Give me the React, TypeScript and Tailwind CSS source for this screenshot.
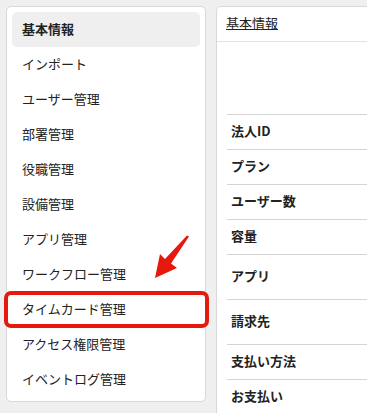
import React from "react";

const items = [
  "基本情報",
  "インポート",
  "ユーザー管理",
  "部署管理",
  "役職管理",
  "設備管理",
  "アプリ管理",
  "ワークフロー管理",
  "タイムカード管理",
  "アクセス権限管理",
  "イベントログ管理",
];

const rows: { label: string; h: string }[] = [
  { label: "法人ID", h: "h-[35px]" },
  { label: "プラン", h: "h-[35px]" },
  { label: "ユーザー数", h: "h-[35px]" },
  { label: "容量", h: "h-[35px]" },
  { label: "アプリ", h: "h-[45px]" },
  { label: "請求先", h: "h-[45px]" },
  { label: "支払い方法", h: "h-[35px]" },
  { label: "お支払い", h: "h-[35px]" },
];

export default function App() {
  return (
    <div
      className="relative w-[367px] h-[413px] overflow-hidden bg-[#efefef] text-[13px] text-[#222]"
      style={{ fontFamily: '"Noto Sans CJK JP", "Noto Sans", sans-serif' }}
    >
      <div className="flex gap-[10px] pt-[6px] pl-[6px]">
        <div className="w-[200px] h-[396px] shrink-0 bg-white border border-[#d8d8d8] rounded-[5px] px-[5px] pt-[5px]">
          {items.map((t, i) => (
            <div
              key={t}
              className={
                "h-[35px] flex items-center pl-[10px] pb-[2px] rounded-[5px] " +
                (i === 0 ? "bg-[#efefef] font-bold" : "")
              }
            >
              {t}
            </div>
          ))}
        </div>
        <div className="w-[170px] h-[420px] shrink-0 bg-white border border-[#d8d8d8] rounded-tl-[5px]">
          <div className="h-[35px] flex items-center pl-[9px] pb-[2px] border-b border-[#e2e2e2]">
            <span className="underline">基本情報</span>
          </div>
          <div className="pl-[10px] pt-[72px]">
            {rows.map((r) => (
              <div
                key={r.label}
                className={r.h + " flex items-center pl-[4px] pb-[2px] border-t border-[#d4d4d4] font-bold"}
              >
                {r.label}
              </div>
            ))}
          </div>
        </div>
      </div>
      <div className="absolute left-[4px] top-[291px] w-[205px] h-[37px] border-[4px] border-[#e5190e] rounded-[7px]" />
      <svg
        className="absolute left-0 top-0"
        width="367"
        height="413"
        viewBox="0 0 367 413"
      >
        <polygon
          points="189,236.5 187,235.5 165,259 160,254 155,278 177,268 171,263.5"
          fill="#e5190e"
        />
      </svg>
    </div>
  );
}
